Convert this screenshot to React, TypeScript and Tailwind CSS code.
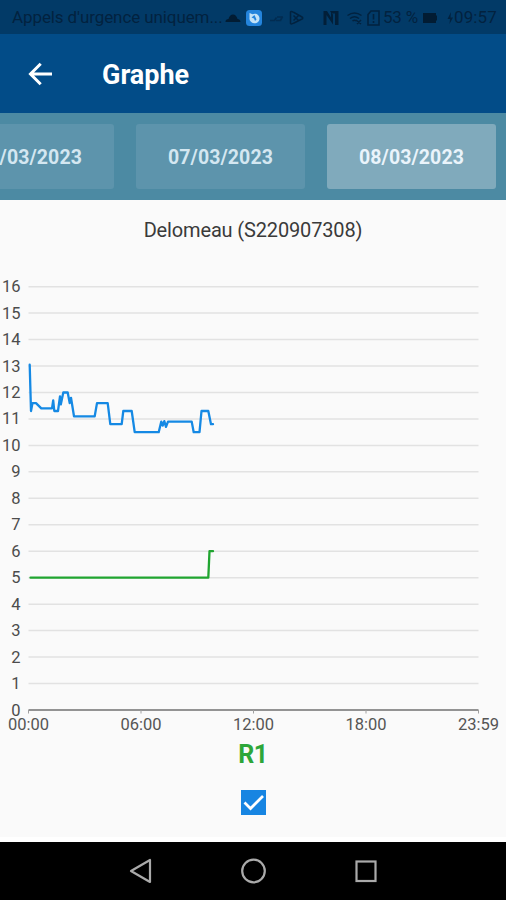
import { useState } from 'react';

type Point = [number, number];

const dates = ['06/03/2023', '07/03/2023', '08/03/2023'];

const hours = [
  { label: '00:00', x: 28.5 },
  { label: '06:00', x: 141 },
  { label: '12:00', x: 253.5 },
  { label: '18:00', x: 366 },
  { label: '23:59', x: 478.5 },
];

const levels = Array.from({ length: 17 }, (_, i) => i);

// x in chart pixels, y as a level on the 0-16 scale
const blueLine: Point[] = [
  [29.7, 13.05], [31, 11.3], [32.5, 11.6], [36, 11.6], [41.3, 11.4], [52, 11.4],
  [53.2, 11.7], [54.3, 11.3], [58, 11.3], [60, 11.85], [60.8, 11.55], [63.3, 12],
  [67.7, 12], [69.7, 11.6], [71, 11.8], [74, 11.1], [94.7, 11.1], [97, 11.6],
  [107.7, 11.6], [110.3, 10.8], [121.7, 10.8], [123.3, 11.3], [131.7, 11.3],
  [134.7, 10.5], [158.7, 10.5], [161.3, 10.9], [162.7, 10.75], [164.3, 10.92],
  [166, 10.7], [168, 10.9], [191.7, 10.9], [193.7, 10.5], [199.5, 10.5],
  [201.5, 11.3], [208.3, 11.3], [211, 10.8], [213, 10.8],
];

const greenLine: Point[] = [
  [30.5, 5], [208.3, 5], [209.5, 6], [213, 6],
];

const levelToY = (level: number) => 450 - level * 26.46;

const toPoints = (line: Point[]) =>
  line.map(([x, level]) => `${x},${levelToY(level).toFixed(1)}`).join(' ');

function StatusBar() {
  return (
    <div className="flex h-[34px] items-center bg-[#023a67] pt-[2px] text-[17px] text-[#02223f]">
      <span className="ml-3 w-[210px] shrink-0 tracking-[-0.1px] whitespace-nowrap">
        Appels d'urgence uniquem...
      </span>
      <svg className="ml-[3px] h-4 w-4 shrink-0" viewBox="0 0 16 16" fill="#021c33">
        <path d="M.5 12c-.3-2 1.500-3 3-3 .5-2.500 2.500-4.500 4.500-4.500s4 2 4.500 4.500c1.500 0 3 1 3 3z" />
      </svg>
      <svg className="ml-[5px] h-4 w-4 shrink-0" viewBox="0 0 16 16">
        <rect width="16" height="16" rx="3.500" fill="#2484dc" />
        <path d="M3.500 3l3 1.300C10 2.500 13.500 5 13.500 8.500c0 3-2.500 5-5.500 4.700-3-.3-5-3-4.500-5.500z" fill="#c3e2f7" />
        <path d="M5.500 7.500l3-2.500 2 4.500-1.500 1.500-1-2.500z" fill="#2484dc" />
      </svg>
      <svg className="ml-2 h-4 w-[14px] shrink-0" viewBox="0 0 14 16" fill="none" stroke="#022c51" strokeWidth="1.700">
        <path d="M0 10.500h4.500l2-3M6 10.500h4.500l2-4M7 7h6" />
      </svg>
      <svg className="ml-[5px] h-4 w-[15px] shrink-0" viewBox="0 0 15 16" fill="none" stroke="#02223f" strokeWidth="1.500">
        <path d="M1.500 2v11.500c1 1 2.500 0 3.500-.5l8-4c1-.6 1-1.400 0-2l-8-4.500C3.500 1.800 2 1 1.500 2z" />
        <path d="M4.500 5.500l5 5M4.500 10.500l5-5" />
      </svg>
      <svg className="ml-[19px] h-4 w-4 shrink-0" viewBox="0 0 16 16" fill="#021f39">
        <path d="M.5 1H4l4 6.500V3l2 1.500v10L3.500 5v10h-3zM7 1h8.500v14H12V3.500H8.500z" />
      </svg>
      <svg className="ml-2 h-4 w-[15px] shrink-0" viewBox="0 0 15 16" fill="none" stroke="#02223f" strokeWidth="1.500">
        <path d="M.5 5.500q7-5 14 0M3 8.500q4.500-3.500 9 0M5.500 11q2-1.500 4 0M9 10l5 4M14 10l-4 4" />
      </svg>
      <svg className="ml-[5px] h-4 w-[13px] shrink-0" viewBox="0 0 13 16" fill="none" stroke="#02223f" strokeWidth="1.600">
        <path d="M4 1h8v14H1V4.500zM6.500 4v5.500M6.500 11v2" />
      </svg>
      <span className="ml-[3px] w-[36px] shrink-0 tracking-[-0.2px] whitespace-nowrap">53 %</span>
      <svg className="ml-[3px] h-4 w-4 shrink-0" viewBox="0 0 16 16" fill="#021c33">
        <path d="M1 3h13v2.500h1v5h-1V13H1z" />
      </svg>
      <svg className="ml-2 h-4 w-2 shrink-0" viewBox="0 0 8 16" fill="#02223f">
        <path d="M5 2L1.500 9H4l-.5 5L7 7.500H4.500z" />
      </svg>
      <span className="tracking-[0.1px]">09:57</span>
    </div>
  );
}

function Chart() {
  return (
    <svg className="block h-[480px] w-full" viewBox="0 0 506 480">
      {levels.map((level) => (
        <g key={level}>
          {level > 0 && (
            <line x1="28.500" x2="478.500" y1={levelToY(level)} y2={levelToY(level)} stroke="#e2e2e2" strokeWidth="1.500" />
          )}
          <text x="20.500" y={levelToY(level) + 5.5} textAnchor="end" fontSize="16.500" fill="#4c4c4c">
            {level}
          </text>
        </g>
      ))}
      <line x1="28.500" x2="478.500" y1="450" y2="450" stroke="#707070" strokeWidth="1.700" />
      {hours.map(({ label, x }) => (
        <g key={label}>
          <line x1={x} x2={x} y1="450" y2="453.500" stroke="#a0a0a0" />
          <text x={x} y="469.500" textAnchor="middle" fontSize="16.500" fill="#555">
            {label}
          </text>
        </g>
      ))}
      <polyline points={toPoints(blueLine)} fill="none" stroke="#1589e4" strokeWidth="2.300" strokeLinejoin="round" strokeLinecap="round" />
      <polyline points={toPoints(greenLine)} fill="none" stroke="#20a530" strokeWidth="2.300" strokeLinejoin="round" strokeLinecap="round" />
    </svg>
  );
}

export default function App() {
  const [selected, setSelected] = useState('08/03/2023');
  const [checked, setChecked] = useState(true);

  return (
    <div className="flex h-[900px] w-[506px] flex-col overflow-hidden bg-[#fafafa] font-[Roboto,sans-serif]">
      <StatusBar />

      <header className="flex h-[79px] shrink-0 items-center bg-[#024c88] text-white">
        <button className="ml-[28px]">
          <svg className="h-6 w-6" viewBox="0 0 24 24" fill="none" stroke="currentColor" strokeWidth="3">
            <path d="M24 12H2.500M12.700 1.800L2.500 12l10.200 10.200" />
          </svg>
        </button>
        <h1 className="ml-[50px] pt-1 text-[27px] font-bold">Graphe</h1>
      </header>

      {/* Date picker, scrolled to the last day */}
      <nav className="flex h-[87px] shrink-0 justify-end gap-[22px] bg-[#4c8aa3] pt-[11px] pr-[10px]">
        {dates.map((date) => (
          <button
            key={date}
            onClick={() => setSelected(date)}
            className={`h-[65px] w-[169px] shrink-0 rounded-[3px] pt-0.5 text-[19.5px] font-bold tracking-[0.1px] ${date === selected ? 'bg-[#80aabc] text-[#eaf4fb]' : 'bg-[#5d94ac] text-[#d4e7f1]'}`}
          >
            {date}
          </button>
        ))}
      </nav>

      <main className="flex h-[637px] shrink-0 flex-col items-center">
        <h2 className="mt-[15px] h-[30px] text-[20px] leading-[30px] tracking-[-0.15px] text-[#3a3a3a]">
          Delomeau (S220907308)
        </h2>
        <div className="mt-[15px] w-full">
          <Chart />
        </div>
        <span className="h-[30px] text-[25px] leading-[30px] font-bold tracking-[-0.5px] text-[#2da639]">R1</span>
        <button
          onClick={() => setChecked(!checked)}
          className="mt-5 flex size-[25px] items-center justify-center bg-[#1785e2]"
        >
          {checked && (
            <svg className="h-[25px] w-[25px]" viewBox="0 0 25 25" fill="none" stroke="white" strokeWidth="2.700">
              <path d="M3.500 12.500l6 6L22 6" />
            </svg>
          )}
        </button>
      </main>

      <footer className="flex flex-1 items-center justify-center gap-[87px] border-t-[5px] border-white bg-black">
        <svg className="h-[26px] w-[26px]" viewBox="0 0 26 26" fill="none" stroke="#aaa" strokeWidth="2.200" strokeLinejoin="round">
          <path d="M23 2v22L4 13z" />
        </svg>
        <svg className="h-[26px] w-[26px]" viewBox="0 0 26 26" fill="none" stroke="#aaa" strokeWidth="2.200">
          <circle cx="13.500" cy="13" r="11.300" />
        </svg>
        <svg className="h-[26px] w-[26px]" viewBox="0 0 26 26" fill="none" stroke="#aaa" strokeWidth="2.200">
          <rect x="3.500" y="3.500" width="19" height="19.500" />
        </svg>
      </footer>
    </div>
  );
}
